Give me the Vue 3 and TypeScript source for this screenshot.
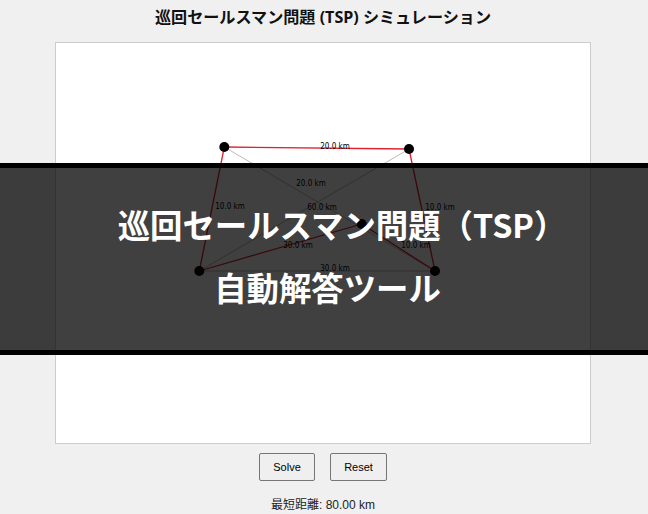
<script setup lang="ts">
interface City {
  x: number
  y: number
}

interface Label {
  x: number
  y: number
  text: string
}

const cities: City[] = [
  { x: 168.3, y: 104 },
  { x: 353, y: 106 },
  { x: 143.3, y: 228 },
  { x: 379, y: 228 },
  { x: 305.7, y: 181 },
]

const greyEdges: [number, number][] = [
  [0, 3],
  [1, 2],
  [2, 3],
]

const routeEdges: [number, number][] = [
  [0, 1],
  [1, 3],
  [3, 4],
  [4, 2],
  [2, 0],
]

const labels: Label[] = [
  { x: 279, y: 106, text: '20.0 km' },
  { x: 255, y: 143, text: '20.0 km' },
  { x: 266, y: 167, text: '60.0 km' },
  { x: 174, y: 166, text: '10.0 km' },
  { x: 384, y: 167, text: '10.0 km' },
  { x: 242, y: 205, text: '30.0 km' },
  { x: 360, y: 205, text: '10.0 km' },
  { x: 279, y: 228, text: '30.0 km' },
]
</script>

<template>
  <div class="page">
    <h1 class="title">巡回セールスマン問題 (TSP) シミュレーション</h1>

    <svg class="canvas" viewBox="0 0 534 400" width="534" height="400">
      <line
        v-for="edge in greyEdges"
        :key="`g${edge[0]}-${edge[1]}`"
        :x1="cities[edge[0]].x"
        :y1="cities[edge[0]].y"
        :x2="cities[edge[1]].x"
        :y2="cities[edge[1]].y"
        stroke="#bbb"
        stroke-width="1"
      />
      <line
        v-for="edge in routeEdges"
        :key="`r${edge[0]}-${edge[1]}`"
        :x1="cities[edge[0]].x"
        :y1="cities[edge[0]].y"
        :x2="cities[edge[1]].x"
        :y2="cities[edge[1]].y"
        stroke="#e0202c"
        stroke-width="1.3"
      />
      <circle v-for="(city, i) in cities" :key="i" :cx="city.x" :cy="city.y" r="5" fill="#000" />
      <text
        v-for="label in labels"
        :key="`${label.x}-${label.y}`"
        :x="label.x"
        :y="label.y"
        class="distance"
        text-anchor="middle"
      >
        {{ label.text }}
      </text>
    </svg>

    <div class="controls">
      <button class="control-button solve">Solve</button>
      <button class="control-button reset">Reset</button>
    </div>

    <p class="result">最短距離: 80.00 km</p>

    <div class="banner">
      <p class="banner-main">巡回セールスマン問題（TSP）</p>
      <p class="banner-sub">自動解答ツール</p>
    </div>
  </div>
</template>

<style scoped>
.page {
  position: relative;
  width: 648px;
  height: 514px;
  padding-right: 2px;
  box-sizing: border-box;
  overflow: hidden;
  background-color: #f0f0f0;
  display: flex;
  flex-direction: column;
  align-items: center;
  font-family: "Liberation Sans", "Noto Sans CJK JP", sans-serif;
}

.title {
  margin: 0;
  height: 42px;
  padding-top: 5px;
  box-sizing: border-box;
  font-family: "Noto Sans", "Noto Sans CJK JP", sans-serif;
  font-size: 16.1px;
  line-height: 24px;
  font-weight: 700;
  color: #111;
}

.canvas {
  display: block;
  flex: none;
  box-sizing: content-box;
  background-color: #fff;
  border: 1px solid #ccc;
}

.distance {
  font-family: "DejaVu Sans", sans-serif;
  font-stretch: condensed;
  font-size: 8px;
  fill: #000;
}

.controls {
  display: flex;
  gap: 15px;
  margin-top: 9px;
}

.control-button {
  height: 28px;
  padding: 0;
  border: 1px solid #767676;
  border-radius: 2px;
  background-color: #efefef;
  color: #000;
  font-family: "Liberation Sans", sans-serif;
  font-size: 11px;
}

.solve {
  width: 56px;
}

.reset {
  width: 57px;
}

.result {
  margin: 15px 0 0;
  font-size: 12px;
  line-height: 18px;
  color: #222;
}

.banner {
  position: absolute;
  left: 0;
  right: 0;
  top: 163px;
  height: 192px;
  box-sizing: border-box;
  border-top: 5px solid #000;
  border-bottom: 5px solid #000;
  background-color: rgba(0, 0, 0, 0.75);
  padding-top: 24px;
  text-align: center;
  color: #fff;
  font-family: "Noto Sans CJK JP", sans-serif;
  font-size: 32.4px;
  font-weight: 700;
  line-height: 63px;
}

.banner p {
  margin: 0;
}

.banner-main {
  padding-left: 36px;
  white-space: nowrap;
}

.banner-sub {
  padding-left: 7px;
}
</style>
